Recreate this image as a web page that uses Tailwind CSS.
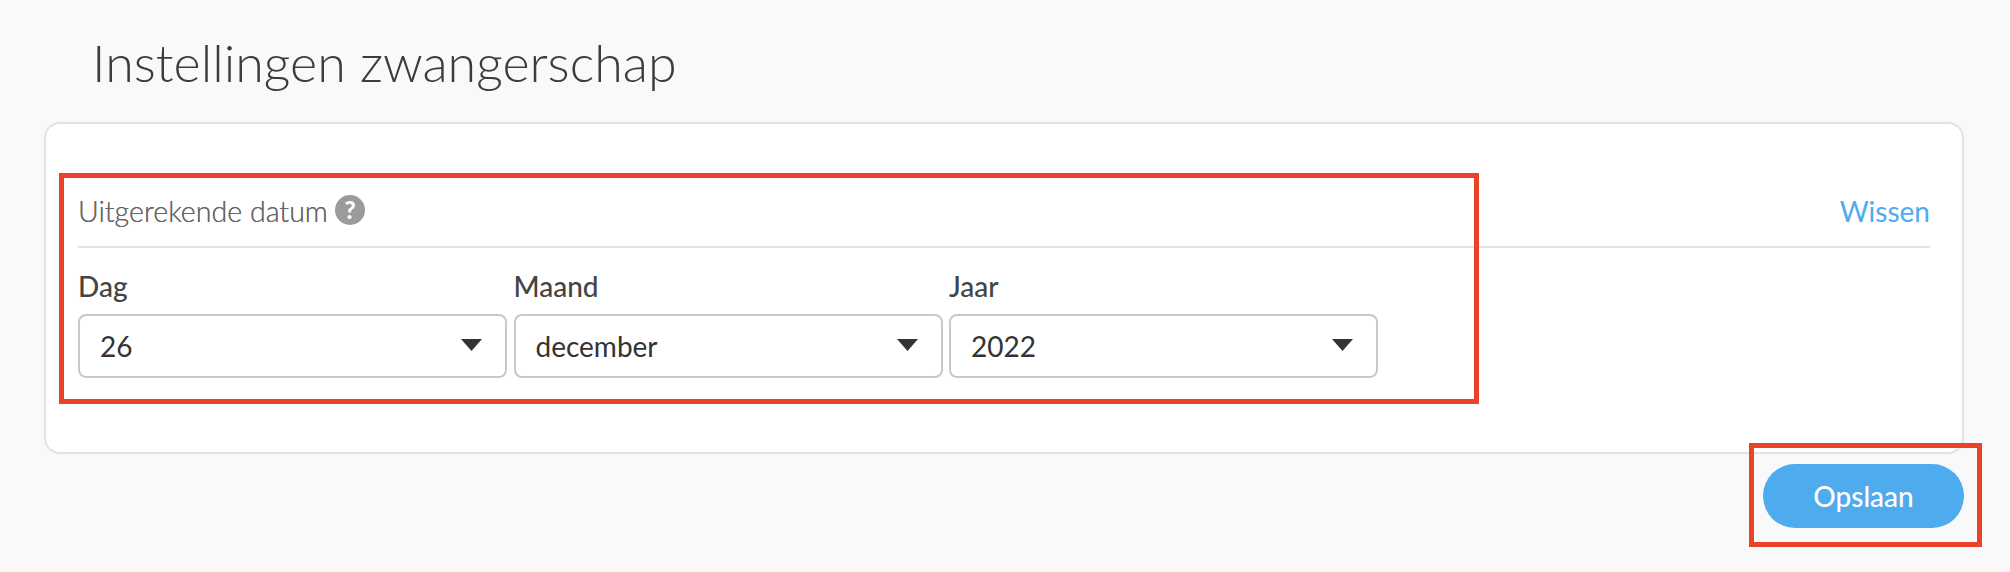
<!doctype html>
<html lang="nl"><head><meta charset="utf-8"><script src="https://cdn.jsdelivr.net/npm/@tailwindcss/browser@4"></script><title>Instellingen zwangerschap</title></head>
<body class="m-0 bg-[#f9f9f9]">
<div class="relative w-[2010px] h-[572px] overflow-hidden bg-[#f9f9f9] font-['Lato','sans-serif'] pt-[28px]">
  <h1 class="ml-[92px] text-[52px] leading-[68px] font-light text-[#3c3c3c] m-0">Instellingen zwangerschap</h1>
  <section class="ml-[44px] mt-[26px] w-[1920px] h-[332px] bg-white border-2 border-[#e2e2e2] rounded-[16px] pl-[32px] pr-[32px] pt-[60px]">
    <div class="flex items-center justify-between h-[64px] border-b-2 border-[#e2e2e2] pb-[8px]">
      <div class="flex items-center gap-[7px]">
        <span class="text-[28.6px] font-light text-[#666] [text-shadow:0_0_0.4px_#666]">Uitgerekende datum</span>
        <svg class="w-[30px] h-[30px] mb-[2px]" viewBox="0 0 30 30"><circle cx="15" cy="15" r="15" fill="#9b9b9b"/><text x="15" y="23.5" text-anchor="middle" font-family="Lato" font-weight="900" font-size="24" fill="#fff">?</text></svg>
      </div>
      <a class="text-[28px] text-[#4dabee]">Wissen</a>
    </div>
    <div class="flex gap-[6.5px] mt-[20px] w-[1310px]">
      <div class="w-[429px]">
        <div class="text-[28px] leading-[36px] font-medium text-[#444] h-[46px]">Dag</div>
        <div class="flex items-center justify-between h-[64px] border-2 border-[#c8c8c8] rounded-[8px] bg-white pl-[20px] pr-[23px] text-[28px] text-[#333]"><span>26</span><svg class="w-[21px] h-[12px] mb-[3px]" viewBox="0 0 21 12"><path d="M0 0H21L10.5 12Z" fill="#333"/></svg></div>
      </div>
      <div class="w-[429px]">
        <div class="text-[28px] leading-[36px] font-medium text-[#444] h-[46px]">Maand</div>
        <div class="flex items-center justify-between h-[64px] border-2 border-[#c8c8c8] rounded-[8px] bg-white pl-[20px] pr-[23px] text-[28px] text-[#333]"><span>december</span><svg class="w-[21px] h-[12px] mb-[3px]" viewBox="0 0 21 12"><path d="M0 0H21L10.5 12Z" fill="#333"/></svg></div>
      </div>
      <div class="w-[429px]">
        <div class="text-[28px] leading-[36px] font-medium text-[#444] h-[46px]">Jaar</div>
        <div class="flex items-center justify-between h-[64px] border-2 border-[#c8c8c8] rounded-[8px] bg-white pl-[20px] pr-[23px] text-[28px] text-[#333]"><span>2022</span><svg class="w-[21px] h-[12px] mb-[3px]" viewBox="0 0 21 12"><path d="M0 0H21L10.5 12Z" fill="#333"/></svg></div>
      </div>
    </div>
  </section>
  <div class="flex justify-end w-[1964px] mt-[10px]">
    <button class="w-[201px] h-[64px] rounded-full bg-[#4dabee] text-white text-[28px] font-medium">Opslaan</button>
  </div>
  <div class="absolute left-[59px] top-[173px] w-[1420px] h-[231px] border-[5px] border-[#e94427]"></div>
  <div class="absolute left-[1749px] top-[443px] w-[233px] h-[104px] border-[5px] border-[#e94427]"></div>
</div>
</body></html>
